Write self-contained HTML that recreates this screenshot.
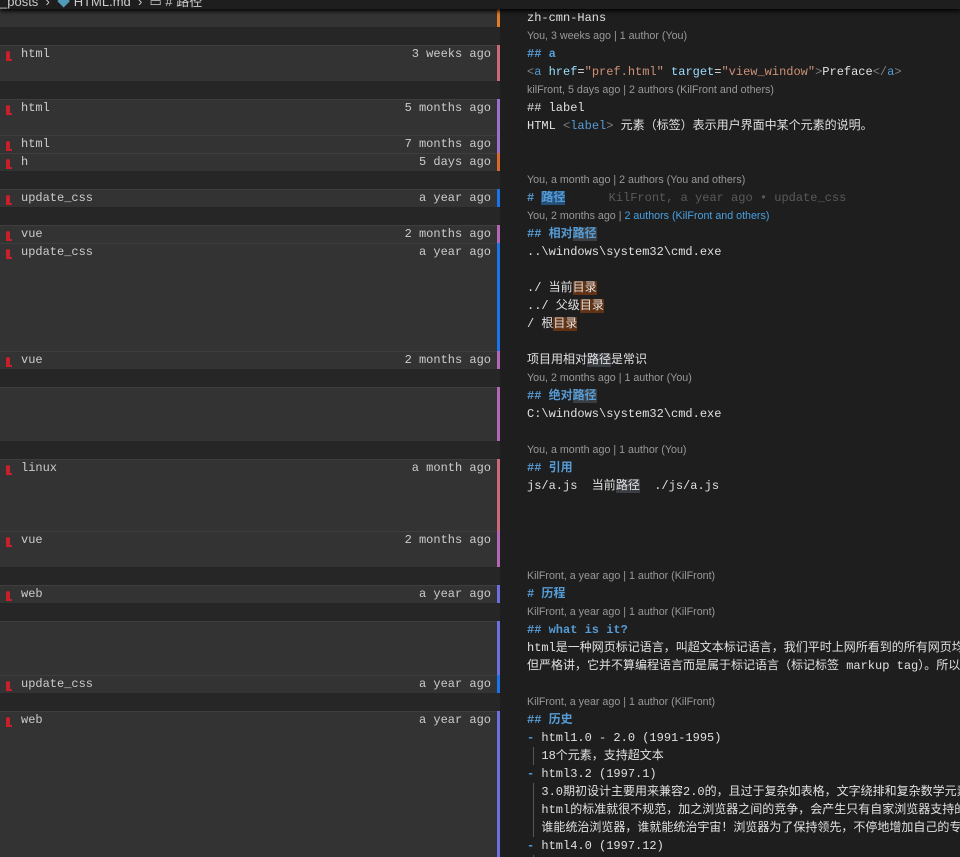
<!DOCTYPE html>
<html><head><meta charset="utf-8"><style>
*{margin:0;padding:0;box-sizing:border-box}
body{width:960px;height:857px;background:#1e1e1e;position:relative;overflow:hidden;font-family:"Liberation Mono","Noto Sans CJK SC",monospace;font-size:12px;color:#e0e0e0}
.g{position:absolute;left:0;width:500px;height:100%;background:#262626}
.b{position:absolute;left:0;width:500px;background:#333;border-top:1px solid #3e3e3e}
.b::after{content:"";position:absolute;right:0;top:-1px;bottom:0;width:3px;background:var(--c)}
.b .n{position:absolute;left:21px;top:0;line-height:17px;color:#ccc}
.b .t{position:absolute;right:9px;top:0;line-height:17px;color:#ccc}
.b .i{position:absolute;left:6px;top:5px;width:4px;height:8px;background:#c8202a;border-radius:2px 2px 0 0}
.b .i::after{content:"";position:absolute;left:0;top:8px;width:6px;height:2px;background:#c8202a}
.l{position:absolute;left:527px;height:18px;line-height:18px;white-space:pre;color:#e0e0e0}
.c{position:absolute;left:527px;height:18px;line-height:18px;white-space:pre;font-family:"Liberation Sans","Noto Sans CJK SC",sans-serif;font-size:10.7px;color:#999}
.h{color:#569cd6;font-weight:bold}
.tg{color:#808080}.tn{color:#569cd6}.at{color:#9cdcfe}.s{color:#ce9178}
.hl{background:#3a3d41}.or{background:#613214}
.top{position:absolute;left:0;top:0;width:960px;height:9px;background:#1e1e1e;box-shadow:0 2px 4px #000;z-index:2;overflow:hidden}
.top span{position:absolute;top:-9px;left:0;font-family:"Liberation Sans","Noto Sans CJK SC",sans-serif;font-size:13px;color:#ccc;white-space:pre}
.gl{position:absolute;left:533px;width:1px;background:#555}
</style></head><body>
<div class="top"><span>_posts  ›  <span style="position:static;color:#519aba">◆</span> HTML.md  ›  ▭ # 路径</span></div>
<div class="g"></div>

<div class="b" style="top:9px;height:18px;--c:#e07b2a"></div>
<div class="b" style="top:45px;height:36px;--c:#c9697a"><div class="i"></div><span class="n">html</span><span class="t">3 weeks ago</span></div>
<div class="b" style="top:99px;height:36px;--c:#9b6fc9"><div class="i"></div><span class="n">html</span><span class="t">5 months ago</span></div>
<div class="b" style="top:135px;height:18px;--c:#9b6fc9"><div class="i"></div><span class="n">html</span><span class="t">7 months ago</span></div>
<div class="b" style="top:153px;height:18px;--c:#d9692a"><div class="i"></div><span class="n">h</span><span class="t">5 days ago</span></div>
<div class="b" style="top:189px;height:18px;--c:#1a73e8"><div class="i"></div><span class="n">update_css</span><span class="t">a year ago</span></div>
<div class="b" style="top:225px;height:18px;--c:#b366b3"><div class="i"></div><span class="n">vue</span><span class="t">2 months ago</span></div>
<div class="b" style="top:243px;height:108px;--c:#1a73e8"><div class="i"></div><span class="n">update_css</span><span class="t">a year ago</span></div>
<div class="b" style="top:351px;height:18px;--c:#b366b3"><div class="i"></div><span class="n">vue</span><span class="t">2 months ago</span></div>
<div class="b" style="top:387px;height:54px;--c:#b366b3"></div>
<div class="b" style="top:459px;height:72px;--c:#c9697a"><div class="i"></div><span class="n">linux</span><span class="t">a month ago</span></div>
<div class="b" style="top:531px;height:36px;--c:#b366b3"><div class="i"></div><span class="n">vue</span><span class="t">2 months ago</span></div>
<div class="b" style="top:585px;height:18px;--c:#6b6fe0"><div class="i"></div><span class="n">web</span><span class="t">a year ago</span></div>
<div class="b" style="top:621px;height:54px;--c:#6b6fe0"></div>
<div class="b" style="top:675px;height:18px;--c:#1a73e8"><div class="i"></div><span class="n">update_css</span><span class="t">a year ago</span></div>
<div class="b" style="top:711px;height:146px;--c:#6b6fe0"><div class="i"></div><span class="n">web</span><span class="t">a year ago</span></div>

<div class="l" style="top:9px">zh-cmn-Hans</div>
<div class="c" style="top:27px">You, 3 weeks ago | 1 author (You)</div>
<div class="l" style="top:45px"><span class="h">## a</span></div>
<div class="l" style="top:63px"><span class="tg">&lt;</span><span class="tn">a</span> <span class="at">href</span>=<span class="s">"pref.html"</span> <span class="at">target</span>=<span class="s">"view_window"</span><span class="tg">&gt;</span>Preface<span class="tg">&lt;/</span><span class="tn">a</span><span class="tg">&gt;</span></div>
<div class="c" style="top:81px">kilFront, 5 days ago | 2 authors (KilFront and others)</div>
<div class="l" style="top:99px">## label</div>
<div class="l" style="top:117px">HTML <span class="tg">&lt;</span><span class="tn">label</span><span class="tg">&gt;</span> 元素（标签）表示用户界面中某个元素的说明。</div>
<div class="c" style="top:171px">You, a month ago | 2 authors (You and others)</div>
<div class="l" style="top:189px"><span class="h"># <span style="background:#264f78">路径</span></span><span style="color:#5a5a5a">      KilFront, a year ago • update_css</span></div>
<div class="c" style="top:207px">You, 2 months ago | <span style="color:#4aa0e0">2 authors (KilFront and others)</span></div>
<div class="l" style="top:225px"><span class="h">## 相对<span class="hl">路径</span></span></div>
<div class="l" style="top:243px">..\windows\system32\cmd.exe</div>
<div class="l" style="top:279px">./ 当前<span class="or">目录</span></div>
<div class="l" style="top:297px">../ 父级<span class="or">目录</span></div>
<div class="l" style="top:315px">/ 根<span class="or">目录</span></div>
<div class="l" style="top:351px">项目用相对<span class="hl">路径</span>是常识</div>
<div class="c" style="top:369px">You, 2 months ago | 1 author (You)</div>
<div class="l" style="top:387px"><span class="h">## 绝对<span class="hl">路径</span></span></div>
<div class="l" style="top:405px">C:\windows\system32\cmd.exe</div>
<div class="c" style="top:441px">You, a month ago | 1 author (You)</div>
<div class="l" style="top:459px"><span class="h">## 引用</span></div>
<div class="l" style="top:477px">js/a.js  当前<span class="hl">路径</span>  ./js/a.js</div>
<div class="c" style="top:567px">KilFront, a year ago | 1 author (KilFront)</div>
<div class="l" style="top:585px"><span class="h"># 历程</span></div>
<div class="c" style="top:603px">KilFront, a year ago | 1 author (KilFront)</div>
<div class="l" style="top:621px"><span class="h">## what is it?</span></div>
<div class="l" style="top:639px">html是一种网页标记语言，叫超文本标记语言，我们平时上网所看到的所有网页均</div>
<div class="l" style="top:657px">但严格讲，它并不算编程语言而是属于标记语言（标记标签 markup tag）。所以</div>
<div class="c" style="top:693px">KilFront, a year ago | 1 author (KilFront)</div>
<div class="l" style="top:711px"><span class="h">## 历史</span></div>
<div class="l" style="top:729px"><span class="h">-</span> html1.0 - 2.0 (1991-1995)</div>
<div class="l" style="top:747px">  18个元素，支持超文本</div>
<div class="l" style="top:765px"><span class="h">-</span> html3.2 (1997.1)</div>
<div class="l" style="top:783px">  3.0期初设计主要用来兼容2.0的，且过于复杂如表格，文字绕排和复杂数学元素</div>
<div class="l" style="top:801px">  html的标准就很不规范，加之浏览器之间的竞争，会产生只有自家浏览器支持的</div>
<div class="l" style="top:819px">  谁能统治浏览器，谁就能统治宇宙！浏览器为了保持领先，不停地增加自己的专</div>
<div class="l" style="top:837px"><span class="h">-</span> html4.0 (1997.12)</div>
<div class="gl" style="top:747px;height:18px"></div>
<div class="gl" style="top:783px;height:54px"></div>
<div class="gl" style="top:855px;height:2px"></div>
</body></html>
